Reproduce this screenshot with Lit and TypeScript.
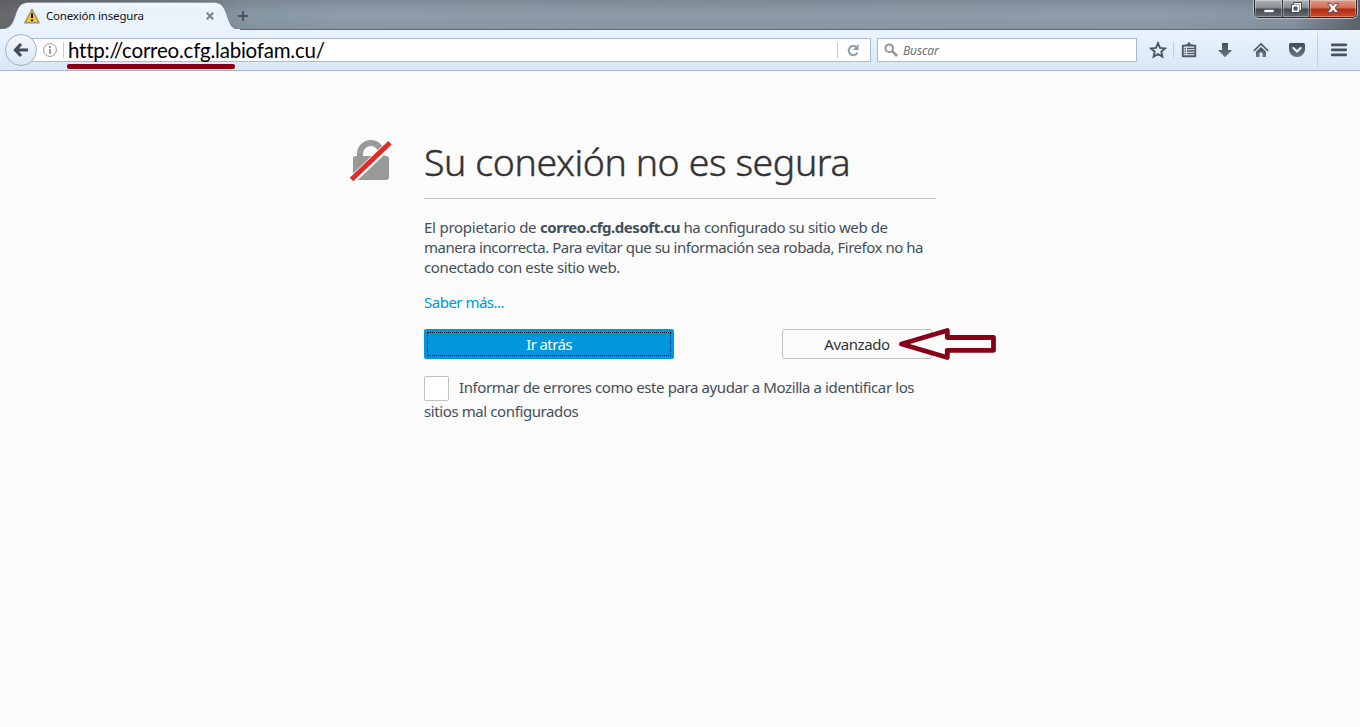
import { LitElement, html, css, svg } from "lit";
import { customElement } from "lit/decorators.js";

const toolIcons = {
  star: svg`<path d="M9 2.2 11 6.9 16 7.4 12.3 10.7 13.4 15.6 9 13.1 4.6 15.6 5.7 10.7 2 7.4 7 6.9Z" fill="none" stroke="#4b5762" stroke-width="1.9"/>`,
  list: svg`<path d="M2.8 4.6H15.2V15.2H2.8Z" fill="#edf5fc" stroke="#4b5762" stroke-width="1.9" stroke-linejoin="round"/><path d="M5 5V3.6H7.2L8 1.6H10L10.8 3.6H13V5Z" fill="#4b5762"/><path d="M4.4 7.5h1.6M7 7.5h7M4.4 10h1.6M7 10h7M4.4 12.5h1.6M7 12.5h7" stroke="#4b5762" stroke-width="1.3"/>`,
  down: svg`<path d="M6 2.5Q6 2 6.6 2H11.4Q12 2 12 2.5V9H16L9 16.2 2 9H6Z" fill="url(#ink)"/>`,
  home: svg`<path d="M1.8 10 9 3 16.2 10" fill="none" stroke="#4b5762" stroke-width="1.7"/><path d="M4 10.8 9 6 14 10.8V16H10.5V11.5H7.5V16H4Z" fill="url(#ink)"/>`,
  pocket: svg`<path d="M2.5 2H15.5Q17 2 17 3.5V8.5A8 7.5 0 0 1 1 8.5V3.5Q1 2 2.5 2Z" fill="url(#ink)"/><path d="M5.3 7 9 10.5 12.7 7" fill="none" stroke="#eaf3fb" stroke-width="2.1" stroke-linecap="round"/>`,
  menu: svg`<path d="M2.2 3.8H15.8M2.2 8.8H15.8M2.2 13.8H15.8" stroke="#47525d" stroke-width="2.7" stroke-linecap="round"/>`,
};

@customElement("app-root")
export class AppRoot extends LitElement {
  static styles = css`
    :host { display: block; width: 1360px; height: 727px; overflow: hidden; background: #fbfbfb; font-family: "Noto Sans", "Open Sans", sans-serif; color: #424f5a; }
    * { box-sizing: border-box; }
    svg { display: block; flex: none; }
    .strip { height: 30px; display: flex; border-bottom: 1px solid #5b6773;
      background: linear-gradient(#0000001c, #00000000 14px, #0000000c), linear-gradient(90deg, #68696b 0, #7c858e 14%, #8897a4 18%, #8f9dab 25%, #8d9ba8 50%, #8f9dab 85%, #8795a3 95%, #666d75 99%, #60656b); }
    .tab { width: 240px; height: 30px; display: grid; flex: none; }
    .tab > * { grid-area: 1 / 1; }
    .tabrow { display: flex; align-items: center; height: 30px; padding: 2px 0 0 24px; }
    .tabtitle { font-size: 11.5px; color: #101010; width: 160px; margin: -2px 0 0 6px; white-space: nowrap; letter-spacing: -0.18px; }
    .plus { margin: 10px 0 0 -3px; }
    .controls { display: flex; margin-left: auto; margin-right: 3px; width: 103px; height: 18px; border: 1px solid #25292e; border-top: 0; border-radius: 0 0 5px 5px; box-shadow: 0 0 0 1px #b8c0c8; overflow: hidden; }
    .ctl { display: flex; justify-content: center; border-right: 1px solid #34383e; background: linear-gradient(#aeb3b8, #868a90 8px, #44484e 9px, #686d73); box-shadow: inset 0 0 0 1px #ffffff55; }
    .min { width: 28px; } .max { width: 27px; }
    .close { flex: 1; border: 0; background: linear-gradient(#dd9c8b, #cd6c55 8px, #b52a0c 9px, #cc4a2b); }
    .toolbar { height: 41px; display: flex; align-items: center; background: linear-gradient(#eaf3fc, #d8e8f8); border-bottom: 1px solid #a7b8cb; padding-left: 5px; }
    .back { width: 32px; height: 32px; border: 1px solid #9db0c4; border-radius: 50%; background: linear-gradient(#f2f7fc, #dce8f4); display: flex; align-items: center; justify-content: center; z-index: 1; }
    .url { height: 24px; width: 841px; margin-left: -7px; border: 1px solid #a9bbce; background: #fff; display: flex; align-items: center; padding-left: 12px; }
    .vr { width: 1px; height: 16px; background: #c9ced4; flex: none; }
    .address { flex: 1; margin: 0 0 0 4px; font: 20.5px/22px Lato, sans-serif; font-variant-ligatures: none; letter-spacing: -0.22px; color: #000; white-space: nowrap; }
    .search { width: 260px; height: 24px; margin-left: 6px; border: 1px solid #a9bbce; background: #fff; display: flex; align-items: center; padding-left: 6px; gap: 5px; font-size: 12px; font-style: italic; letter-spacing: -0.1px; color: #707070; }
    .tools { display: flex; align-items: center; height: 40px; margin-left: 12px; }
    .tool { width: 18px; height: 18px; }
    .gap { margin-left: 18px; }
    .tall { height: 34px; background: #bfd0e1; margin: 0 12px 0 11px; }
    .page { display: grid; grid-template-columns: 42px 512px; column-gap: 32px; padding: 68px 0 0 350px; }
    h1 { margin: 0; height: 60px; border-bottom: 1px solid #c1c1c1; font-weight: 300; font-size: 37.5px; line-height: 46px; letter-spacing: -0.42px; color: #333; -webkit-text-stroke: 0.45px #333; white-space: nowrap; }
    p { margin: 18px 0 0; font-size: 15px; line-height: 20px; white-space: nowrap; }
    .ln { display: block; }
    .more { display: block; margin-top: 15px; font-size: 15px; line-height: 20px; letter-spacing: -0.5px; color: #0095dd; }
    .buttons { display: flex; justify-content: space-between; width: 508px; margin-top: 17px; height: 30px; }
    .btn { height: 30px; border-radius: 2px; font-size: 15px; display: flex; align-items: center; justify-content: center; }
    .go { width: 250px; background: #0095dd; padding: 3px; color: #fff; letter-spacing: -0.6px; }
    .focus { border: 1px dotted #000; flex: 1; height: 24px; line-height: 22px; text-align: center; }
    .adv { width: 150px; border: 1px solid #c1c1c1; color: #333; letter-spacing: -0.4px; }
    .report { margin-top: 16px; font-size: 15px; line-height: 24px; white-space: nowrap; letter-spacing: -0.4px; }
    .row { display: flex; height: 24px; }
    .box { flex: none; width: 25px; height: 25px; margin: 1px 10px 0 0; border: 1px solid #c1c1c1; border-radius: 2px; background: #fff; }
    .mark { position: absolute; pointer-events: none; }
    .underline { left: 67px; top: 64px; width: 168px; height: 5px; border-radius: 2px; background: #880015; z-index: 2; }
    .arrow { left: 896px; top: 324px; }
    .l1 { letter-spacing: -0.39px; }
    .l1 .lead { letter-spacing: -0.24px; }
    .l1 b { letter-spacing: -0.47px; }
    .l2 { letter-spacing: -0.48px; }
    .l3 { letter-spacing: -0.38px; }
  `;

  private tool(name: keyof typeof toolIcons, cls = "") {
    return html`<svg class="tool ${cls}" viewBox="0 0 18 18"><defs><linearGradient id="ink" x2="0" y2="1"><stop stop-color="#424e59"/><stop offset="1" stop-color="#697783"/></linearGradient></defs>${toolIcons[name]}</svg>`;
  }

  render() {
    return html`
      <div class="strip">
        <div class="tab">
          <svg width="240" height="30"><defs><linearGradient id="tb" x2="0" y2="1"><stop stop-color="#f3f8fd"/><stop offset=".3" stop-color="#e9f2fb"/><stop offset="1" stop-color="#eaf3fc"/></linearGradient></defs><path d="M0 30V29.3C10 28.5 12 25 15 16 18 7 20 2.3 30 2.3H213C221 2.3 224 6 227 15 230 24 231 29 240 30Z" fill="url(#tb)" stroke="#66727e" stroke-width=".7"/><path d="M0 29.5H240" stroke="#eaf3fc"/></svg>
          <div class="tabrow">
            <svg width="16" height="16" viewBox="0 0 16 16"><path d="M8 1.2 15.2 14.8H.8Z" fill="#f4c51d" stroke="#8f8b7b" stroke-width="1.2" stroke-linejoin="round"/><path d="M8 5.3V10M8 11.5V13.3" stroke="#111" stroke-width="2"/></svg>
            <span class="tabtitle">Conexión insegura</span>
            <svg width="8" height="8"><path d="M.8.8 7.2 7.2M7.2.8.8 7.2" stroke="#78828c" stroke-width="2"/></svg>
          </div>
        </div>
        <svg class="plus" width="12" height="12"><path d="M6 1V11M1 6H11" stroke="#48525c" stroke-width="1.8"/></svg>
        <div class="controls">
          <div class="ctl min"><svg width="14" height="17"><path d="M2 9.5H12V12.5H2Z" fill="#fff" stroke="#555a66" stroke-width=".8"/></svg></div>
          <div class="ctl max"><svg width="14" height="17"><path d="M4.5 2.5H12.5V10.5H10.5V12.5H2.5V4.5H4.5Z" fill="#fff" stroke="#454a5a"/><path d="M5 7H8V10H5Z" fill="#555a66" stroke="#454a5a"/><path d="M5 4.5H10.5V10" fill="none" stroke="#777c88" stroke-width=".7"/></svg></div>
          <div class="ctl close"><svg width="14" height="17"><path d="M1.5 3.5H5L7 5.7 9 3.5H12.5L9.2 8 12.5 12.5H9L7 10.3 5 12.5H1.5L4.8 8Z" fill="#fff" stroke="#59445a" stroke-width=".9"/></svg></div>
        </div>
      </div>
      <div class="toolbar">
        <div class="back"><svg width="16" height="16"><path d="M8 2 2.5 8 8 14M3 8H15" fill="none" stroke="#424d58" stroke-width="3.2"/></svg></div>
        <div class="url">
          <svg width="14" height="14"><circle cx="7" cy="7" r="6.4" fill="none" stroke="#999"/><path d="M7 3V5M7 6V11" stroke="#888" stroke-width="1.6"/></svg>
          <svg width="6" height="1"></svg><i class="vr"></i>
          <span class="address">http://correo.cfg.labiofam.cu/</span>
          <i class="vr"></i>
          <svg width="32" height="16"><path d="M19.4 10.8A4.6 4.6 0 1 1 18 4.8" fill="none" stroke="#8c9cab" stroke-width="2.1"/><path d="M20.6 2V8H14.6Z" fill="#8c9cab"/></svg>
        </div>
        <div class="search"><svg width="14" height="14"><circle cx="5.2" cy="5.2" r="3.8" fill="none" stroke="#959595" stroke-width="2"/><path d="M8 8 13 13" stroke="#959595" stroke-width="2.6"/></svg><span class="hint">Buscar</span></div>
        <div class="tools">
          ${this.tool("star")}<svg width="6" height="16"></svg><i class="vr"></i><svg width="6" height="16"></svg>
          ${this.tool("list")}${this.tool("down", "gap")}${this.tool("home", "gap")}${this.tool("pocket", "gap")}
          <i class="vr tall"></i>${this.tool("menu")}
        </div>
      </div>
      <div class="page">
        <svg width="42" height="44"><path d="M10 20V15A10.7 11 0 0 1 31.6 15V20" fill="none" stroke="#999" stroke-width="6"/><rect x="3" y="17" width="36" height="24" rx="3" fill="#999"/><path d="M1.5 41.5 41.5 3.5" stroke="#fbfbfb" stroke-width="8"/><path d="M1.5 40.5 40 3.7" stroke="#dc2d27" stroke-width="5"/></svg>
        <div>
          <h1>Su conexión no es segura</h1>
          <p><span class="ln l1"><span class="lead">El propietario de </span><b>correo.cfg.desoft.cu</b> ha configurado su sitio web de</span><span class="ln l2">manera incorrecta. Para evitar que su información sea robada, Firefox no ha</span><span class="ln l3">conectado con este sitio web.</span></p>
          <span class="more"><span>Saber más...</span></span>
          <div class="buttons"><div class="btn go"><div class="focus"><span>Ir atrás</span></div></div><div class="btn adv"><span>Avanzado</span></div></div>
          <div class="report"><div class="row"><i class="box"></i><span class="r1">Informar de errores como este para ayudar a Mozilla a identificar los</span></div><span class="r2">sitios mal configurados</span></div>
        </div>
      </div>
      <div class="mark underline"></div>
      <svg class="mark arrow" width="104" height="42"><path d="M5.5 20 51.3 6.5V13.5H97.5V26.3H51.3V33.5Z" fill="#fbfbfb" stroke="#880015" stroke-width="4.8" stroke-linejoin="round"/></svg>
    `;
  }
}
